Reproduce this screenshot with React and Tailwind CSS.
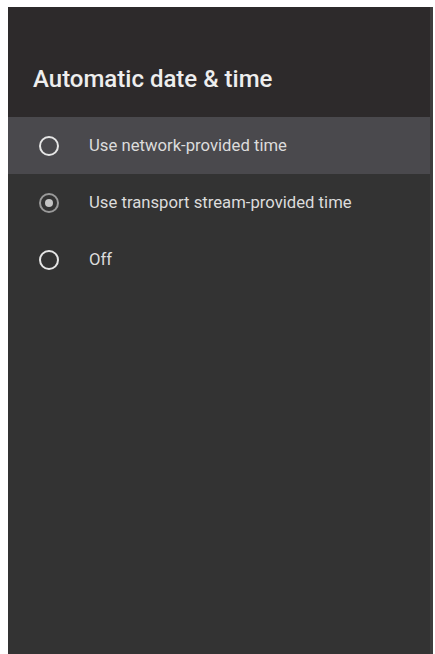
export default function App() {
  const rows = [
    { label: "Use network-provided time", state: "off", active: true },
    { label: "Use transport stream-provided time", state: "on", active: false },
    { label: "Off", state: "off", active: false },
  ];
  return (
    <div className="w-[435px] h-[654px] bg-white pl-[8px] pt-[7px] pr-[2px] overflow-hidden" style={{ fontFamily: "Roboto, 'Liberation Sans', sans-serif" }}>
      <div className="h-full bg-[#333333] flex flex-col border-r-[3px] border-[#3d3d3d]">
        <div className="h-[110px] bg-[#2d2a2b] pl-[25px] pt-[57px]">
          <div className="text-[24px] leading-[30px] font-medium text-[#eeeeee]">Automatic date &amp; time</div>
        </div>
        {rows.map((r, i) => (
          <div key={i} className={`h-[57px] flex items-center pl-[31px] ${r.active ? "bg-[#4a494d]" : ""}`}>
            <div className={`w-[20px] h-[20px] rounded-full border-2 flex items-center justify-center ${r.state === "on" ? "border-[#9a9a9a]" : "border-[#e6e6e6]"}`}>
              {r.state === "on" && <div className="w-[8px] h-[8px] rounded-full bg-[#c4c4c4]" />}
            </div>
            <div className="ml-[30px] text-[16.7px] text-[#dcdcdc]">{r.label}</div>
          </div>
        ))}
      </div>
    </div>
  );
}
